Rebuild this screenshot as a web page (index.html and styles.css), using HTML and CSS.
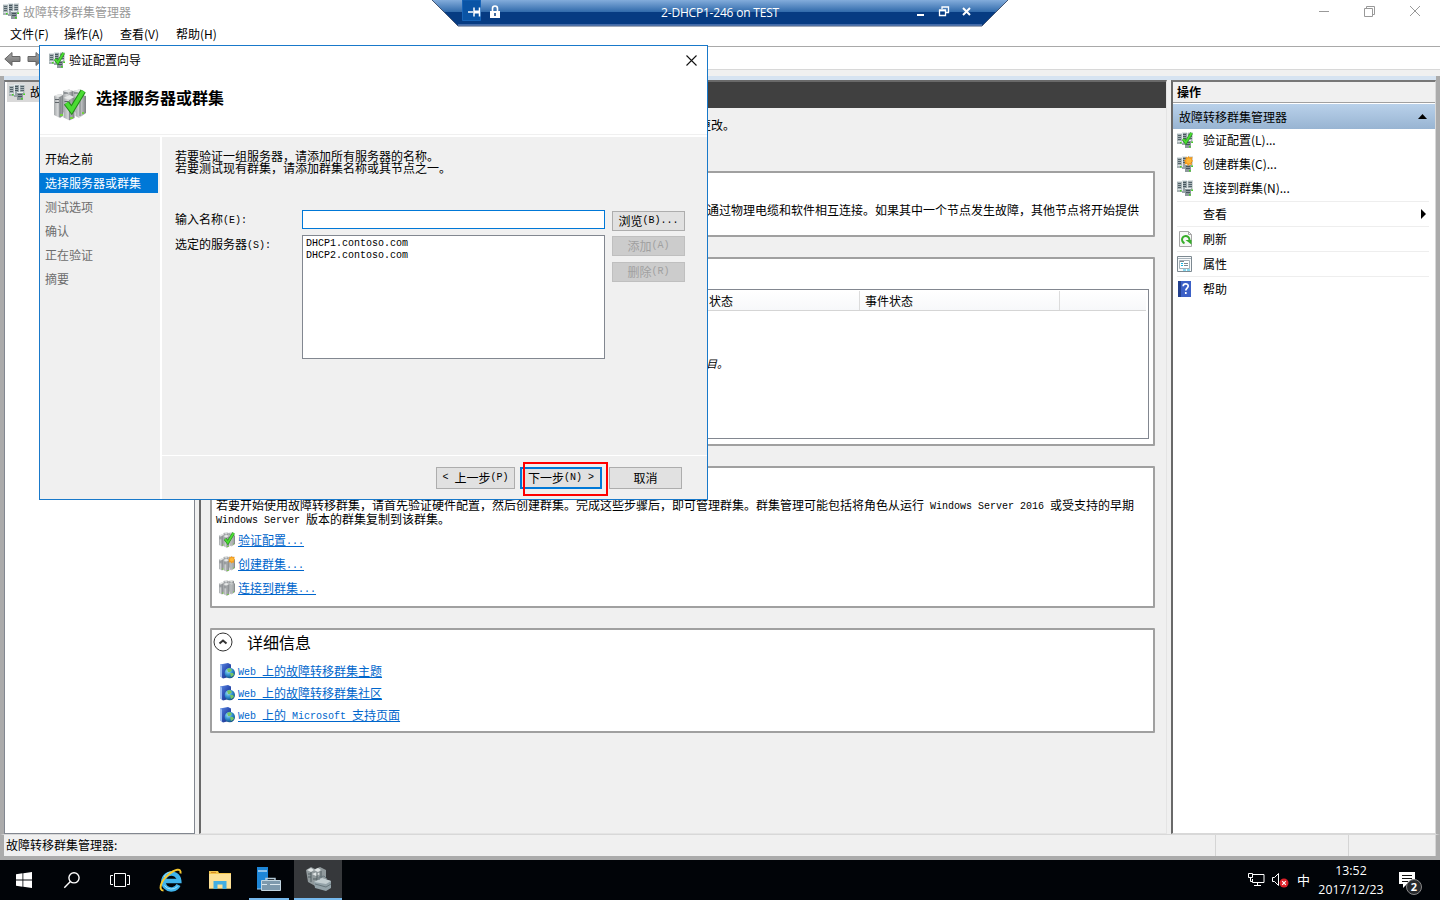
FILE: index.html
```html
<!DOCTYPE html>
<html lang="zh-CN">
<head>
<meta charset="utf-8">
<title>故障转移群集管理器</title>
<link rel="stylesheet" href="styles.css">
</head>
<body>
<svg class="defs" width="0" height="0" aria-hidden="true">
  <defs>
    <linearGradient id="metal" x1="0" x2="1" y1="0" y2="0"><stop offset="0" stop-color="#a4a8aa"/><stop offset=".4" stop-color="#d3d5d6"/><stop offset="1" stop-color="#7b7f82"/></linearGradient>
    <linearGradient id="arrow" x1="0" x2="0" y1="0" y2="1"><stop offset="0" stop-color="#a8a8a8"/><stop offset="1" stop-color="#6c6c6c"/></linearGradient>
    <linearGradient id="rdp" x1="0" x2="0" y1="0" y2="1"><stop offset="0" stop-color="#83acdb"/><stop offset=".47" stop-color="#2f69aa"/><stop offset=".48" stop-color="#063b82"/><stop offset="1" stop-color="#063b82"/></linearGradient>
    <linearGradient id="book" x1="0" x2="1" y1="0" y2="1"><stop offset="0" stop-color="#5f8de6"/><stop offset=".5" stop-color="#2c4fb4"/><stop offset="1" stop-color="#1c2f7c"/></linearGradient>
    <radialGradient id="globe" cx=".35" cy=".3" r=".8"><stop offset="0" stop-color="#a8e4f5"/><stop offset=".5" stop-color="#2f8fd0"/><stop offset="1" stop-color="#0d4474"/></radialGradient>
  </defs>
  <symbol id="servers" viewBox="0 0 16 16">
    <path d="M0 1h5v11H0z" fill="#a9b3b6"/><path d="M1 3.500h3M1 5.500h3M1 7.500h3" stroke="#53636b"/><path d="M0 1.500h5M.5 9.500h4" stroke="#dce3e5"/>
    <path d="M5 0h5v13H5z" fill="#98a4a9"/><path d="M6 2.500h3M6 4.500h3M6 6.500h3" stroke="#46565e"/><path d="M5 .5h5M5.500 1v10" stroke="#e2e8ea"/>
    <path d="M11 0h4.500v11H11z" fill="#a9b3b6"/><path d="M11.500 2.500H15M11.500 4.500H15M11.500 6.500H15" stroke="#53636b"/><path d="M11 .5h5M10.500 1v7" stroke="#dce3e5"/>
    <path d="M8 8h6v8H8z" fill="#8d989c"/><path d="M9 10.500h4M9 12.500h4" stroke="#46565e"/><path d="M8 8.500h6" stroke="#e7edee"/>
    <path d="M3 10h1.500v1.500H3zM14.300 9.500H16V11h-1.700zM12 14h1.700v1.500H12z" fill="#43d421"/>
  </symbol>
  <symbol id="tick" viewBox="0 0 16 16"><path d="M6.200 7 8.800 10.500 14.600 1" fill="none" stroke="#228a18" stroke-width="3"/><path d="M6.200 7 8.800 10.500 14.600 1" fill="none" stroke="#4bdc34" stroke-width="1.900"/></symbol>
  <symbol id="spark" viewBox="0 0 16 16"><path d="m11.500 0 1 1.500 3-.5-.5 2.500L16 5l-1.500 1.500.5 2.500-2.500-.5L11 10l-1-2-2.500.5L8 6 7 4.500l1.700-1L8.500 1l2 .5z" fill="#f39a1c"/><circle cx="11.800" cy="4.800" r="2.600" fill="#ffb838"/></symbol>
  <symbol id="cluster" viewBox="0 0 32 32">
    <path d="M9 2 15 .5 19 2v22l-7 2-3-3z" fill="url(#metal)"/><path d="m19 2 6-1.500L30 2v20l-6 3-5-3z" fill="url(#metal)"/>
    <path d="m0 7 5-2 4 1v21l-3 2-6-3z" fill="url(#metal)"/><path d="m9.500 9 6-3 5 2v21l-5 2.500-6-3z" fill="url(#metal)"/><path d="m21.500 8 6-2L32 7v17l-7 5-3.500-2z" fill="url(#metal)"/>
    <path d="M6 8v20M15.800 11v20M26 9v18" stroke="#70767a"/><path d="M1 10.500h4M1 13.500h4M10.500 12.500h4M10.500 15.500h4M10 4h4M20 4h4" stroke="#5f656a" stroke-width="1.200"/>
    <path d="m0 7 5-2 4 1-4 2zM9.500 9l6-3 5 2-5 2.500zM9 2l6-1.500L19 2l-5 1.500zM19 2l6-1.500L30 2l-5 1.500z" fill="#e6e8e8"/><path d="M6 25h3v2H6zM16 28h3v2h-3zM28 23h2v2h-2z" fill="#74d23f"/>
  </symbol>
  <symbol id="web" viewBox="0 0 16 16"><path d="m1 1.500 8-1.500 3 1.500v12L4 15.500 1 13z" fill="url(#book)"/><path d="m1 1.500 2 1v12L1 13z" fill="#9bbcf2"/><circle cx="10.800" cy="10" r="5.200" fill="url(#globe)"/><path d="m8 6 3-1 2 2-2 2H9zm3 4 3 0 1 2-3 2z" fill="#75c665"/></symbol>
</svg>

<div class="screen">
  <header class="titlebar">
    <svg class="i16"><use href="#servers"/></svg><span class="title">故障转移群集管理器</span>
    <svg class="winbtns" width="104" height="20" viewBox="0 0 104 20" fill="none" stroke="#999"><path d="M0 10.500h10M45.500 7.500h8v8h-8zM47.500 7V5.500h8v8h-2M91 5l10 10M101 5 91 15"/></svg>
  </header>
  <nav class="menubar"><span>文件(F)</span><span>操作(A)</span><span>查看(V)</span><span>帮助(H)</span></nav>
  <div class="toolbar"><svg width="17" height="16" viewBox="0 0 17 16"><path d="M.8 8 8 1.500v4h8v5H8v4z" fill="url(#arrow)" stroke="#666"/></svg><svg width="17" height="16" viewBox="0 0 17 16"><path d="M16.200 8 9 1.500v4H1v5h8v4z" fill="url(#arrow)" stroke="#666"/></svg></div>

  <main class="workspace">
    <aside class="tree"><div class="tree-node"><svg class="i16"><use href="#servers"/></svg><span>故</span></div></aside>
    <section class="center">
      <div class="banner"></div>
      <p class="intro">更改。</p>
      <div class="box overview"><p>通过物理电缆和软件相互连接。如果其中一个节点发生故障，其他节点将开始提供</p></div>
      <div class="box clusters">
        <div class="list">
          <div class="list-head"><span class="c1">状态</span><span class="c2">事件状态</span><span class="c3"></span></div>
          <p class="empty">目。</p>
        </div>
      </div>
      <div class="box manage">
        <p>若要开始使用故障转移群集，请首先验证硬件配置，然后创建群集。完成这些步骤后，即可管理群集。群集管理可能包括将角色从运行<i class="m"> Windows Server 2016 </i>或受支持的早期<br><i class="m">Windows Server </i>版本的群集复制到该群集。</p>
        <div class="link"><span class="ic"><svg class="i16"><use href="#cluster"/></svg><svg class="i16 over"><use href="#tick"/></svg></span><a>验证配置<i class="m">...</i></a></div>
        <div class="link"><span class="ic"><svg class="i16"><use href="#cluster"/></svg><svg class="i12 over"><use href="#spark"/></svg></span><a>创建群集<i class="m">...</i></a></div>
        <div class="link"><span class="ic"><svg class="i16"><use href="#cluster"/></svg></span><a>连接到群集<i class="m">...</i></a></div>
      </div>
      <div class="box details">
        <h2><svg width="20" height="20" viewBox="0 0 20 20" fill="none" stroke="#333"><circle cx="10" cy="10" r="9"/><path d="m6.500 11.500 3.500-3 3.500 3" stroke-width="2"/></svg>详细信息</h2>
        <div class="link"><svg class="i16"><use href="#web"/></svg><a><i class="m">Web </i>上的故障转移群集主题</a></div>
        <div class="link"><svg class="i16"><use href="#web"/></svg><a><i class="m">Web </i>上的故障转移群集社区</a></div>
        <div class="link"><svg class="i16"><use href="#web"/></svg><a><i class="m">Web </i>上的<i class="m"> Microsoft </i>支持页面</a></div>
      </div>
    </section>
    <aside class="actions">
      <h3>操作</h3>
      <div class="group"><span>故障转移群集管理器</span><svg width="9" height="5"><path d="M0 5 4.500 0 9 5z"/></svg></div>
      <div class="act"><span class="ic"><svg class="i16"><use href="#servers"/></svg><svg class="i16 over"><use href="#tick"/></svg></span><span>验证配置(L)...</span></div>
      <div class="act"><span class="ic"><svg class="i16"><use href="#servers"/></svg><svg class="i16 over"><use href="#spark"/></svg></span><span>创建群集(C)...</span></div>
      <div class="act"><span class="ic"><svg class="i16"><use href="#servers"/></svg></span><span>连接到群集(N)...</span></div>
      <div class="act sep"><span class="ic"></span><span>查看</span><svg class="more" width="5" height="10"><path d="M0 0 5 5 0 10z"/></svg></div>
      <div class="act sep"><span class="ic"><svg class="i16" viewBox="0 0 16 16"><path d="M2.500.5h9l3 3v12h-12z" fill="#f7f7f7" stroke="#a6a6a6"/><path d="M11.500.5v3h3" fill="none" stroke="#a6a6a6"/><path d="M7.500 12.200a3.700 3.700 0 1 1 4.700-2.200" fill="none" stroke="#36ad29" stroke-width="2"/><path d="M8.500 9h6v4.500z" fill="#36ad29"/></svg></span><span>刷新</span></div>
      <div class="act sep"><span class="ic"><svg class="i16" viewBox="0 0 16 16"><path d="M.5.5h14v15H.500z" fill="#f8fafb" stroke="#7d8991"/><path d="M1 2.500h13" stroke="#a9b4bc"/><path d="M2.500 4.500h10v8h-10z" fill="#fff" stroke="#a6b0b7"/><path d="M7 7.500h4M7 9.500h4M3 5.500h4" stroke="#7d8991"/><path d="M4 7.500h2M4 9.500h2M6 14h3M10 14h3" stroke="#17b6e2"/></svg></span><span>属性</span></div>
      <div class="act sep"><span class="ic"><svg class="i16" viewBox="0 0 16 16"><path d="M1 0h13v16H1z" fill="#3c60c6"/><path d="M1 0h3v16H1z" fill="#23408e"/><path d="M6.200 5.200c0-3 5-3 5-.2 0 2-2.400 2.200-2.400 4.500M8.800 11v2" fill="none" stroke="#fff" stroke-width="1.700"/></svg></span><span>帮助</span></div>
    </aside>
  </main>
  <footer class="status"><span class="s0">故障转移群集管理器:</span><span class="s1"></span><span class="s2"></span></footer>

  <div class="taskbar">
    <div class="tb"><svg width="16" height="16" viewBox="0 0 16 16" fill="#fff"><path d="M0 2.300 6.500 1.300v6.300H0zM7.300 1.200 16 0v7.600H7.300zM0 8.400h6.500v6.300L0 13.800zM7.300 8.400H16V16l-8.700-1.200z"/></svg></div>
    <div class="tb"><svg width="16" height="16" viewBox="0 0 16 16" fill="none" stroke="#fff" stroke-width="1.400"><circle cx="10" cy="5.800" r="5.100"/><path d="M6.400 9.500.3 15.700"/></svg></div>
    <div class="tb"><svg width="20" height="16" viewBox="0 0 20 16" fill="none" stroke="#fff"><path d="M4.500 1.500h11v13h-11zM3 3.500H.5v9H3M17 3.500h2.500v9H17"/></svg></div>
    <div class="tb ie"><svg width="24" height="24" viewBox="0 0 24 24" fill="none"><path d="M19.500 17A8 8 0 1 1 20.300 13H6" stroke="#3fb4ec" stroke-width="4.400"/><path d="M18.500 18.500a8.500 8.500 0 0 1-13-1M5 9a8.500 8.500 0 0 1 7-5" stroke="#a5e5fc" stroke-width="1"/><path d="M4.500 22.500C-.5 22.500 1 14 8.500 7.500S22.500-.5 21.500 5.500" stroke="#f7c82f" stroke-width="2"/></svg></div>
    <div class="tb folder"><svg width="22" height="20" viewBox="0 0 22 20"><path d="M0 1h9l1 2h12v15.500H0z" fill="#f3c54c"/><path d="M0 4h22v14.500H0z" fill="#fde196"/><path d="M2 2h5v1H2z" fill="#d88c24"/><path d="M4.500 19v-8h13v8h-4v-4.500h-5V19z" fill="#42aee2"/></svg></div>
    <div class="tb run"><svg width="24" height="24" viewBox="0 0 24 24"><path d="M0 0h11v22H0z" fill="#1d86d7"/><path d="M1 4h9" stroke="#fff"/><path d="M0 22h5" stroke="#9bd0f5" stroke-width="1"/><path d="M9 14v-2.500h9V14" fill="none" stroke="#b5cad7" stroke-width="1.500"/><path d="M4.500 13.500h19v10h-19z" fill="#7d99ad" stroke="#c1d4df"/><path d="M5 17.500h5m3 0h10" stroke="#dbe7ee"/></svg></div>
    <div class="tb run active"><svg width="25" height="25" viewBox="0 0 25 25"><path d="m0 3 5-3 4 2 5-2 6 3v14l-9 3-9-5z" fill="#90999c"/><path d="m1 3 4-2 3 2-3 2zM8 3l4-2 3 2-3 2zM6 7l5-2 3 2-4 2z" fill="#e0e5e6"/><path d="M5 5v10M11 5v9M15 4v7M2 7h3M2 10h3M7 12h4" stroke="#535e63"/><path d="m8 15 8-4 9 3v7l-5 3-11-3z" fill="#93a2a8"/><path d="m8 15 8-4 9 3-5 3z" fill="#c3ced1"/><path d="m9 17 11 3 5-3M13 13v-3l5-1 3 3" fill="none" stroke="#68777d"/></svg></div>
    <div class="tray">
      <svg class="net" width="17" height="15" viewBox="0 0 17 15" fill="none" stroke="#fff"><path d="M5 1.500h11v8H4.500V6M6 12.500h7M9.500 10v2M.5.5h4v4h-4zM2.500 4.500v4h2"/></svg>
      <svg class="vol" width="17" height="15" viewBox="0 0 17 15"><path d="M.5 4.500h2l4-4v12l-4-4h-2z" fill="none" stroke="#fff"/><circle cx="12" cy="10" r="4.500" fill="#dc2028"/><path d="m10.200 8.200 3.600 3.600M13.800 8.200l-3.600 3.600" stroke="#fff" stroke-width="1.200"/></svg>
      <span class="ime">中</span>
      <div class="clock"><span>13:52</span><span>2017/12/23</span></div>
      <div class="note"><svg width="17" height="16" viewBox="0 0 17 16"><path d="M0 0h16v12H8l-4 4v-4H0z" fill="#fff"/><path d="M3 3.500h10M3 6.500h10M3 9.500h6" stroke="#111"/></svg><b>2</b></div>
    </div>
  </div>

  <div class="rdpbar">
    <svg class="rdp-bg" width="576" height="27" viewBox="0 0 576 27"><path d="M0 0h576l-26 26H26z" fill="url(#rdp)"/><path d="m0 0 26 26h524L576 0" fill="none" stroke="#435574"/><path d="M26 25h524" stroke="#7d9bd0"/><path d="M30.500 0h18v20.500h-18z" fill="#0a54a5" stroke="#1764b8"/>
      <g fill="none" stroke="#fff"><path d="M36 12h5" stroke-width="1.500"/><path d="M42 7.500v9M47.500 7.500v9" stroke-width="1.500"/><path d="M42 12h5" stroke-width="3"/></g>
      <path d="M58 11h10v7H58z" fill="#fff"/><path d="M60.500 11V8.500a2.500 2.500 0 0 1 5 0V11" fill="none" stroke="#fff" stroke-width="1.600"/><path d="M63 13v3" stroke="#063b82" stroke-width="1.500"/>
      <g fill="none" stroke="#fff"><path d="M485 15h7" stroke-width="2"/><path d="M507.500 10.500h6v5h-6zM507 10h7M510 9V7h6.500v5.500H514" stroke-width="1.300"/><path d="m531 8 7 7M538 8l-7 7" stroke-width="2"/></g>
    </svg>
    <span class="rdp-title">2-DHCP1-246 on TEST</span>
  </div>

  <div class="wizard">
    <div class="wz-title"><span class="ic"><svg class="i16"><use href="#servers"/></svg><svg class="i16 over"><use href="#tick"/></svg></span><span>验证配置向导</span><svg class="wz-close" width="11" height="11"><path d="M.5.5l10 10M10.500.5l-10 10" stroke="#111" stroke-width="1.100"/></svg></div>
    <div class="wz-head"><span class="ic32"><svg width="32" height="32"><use href="#cluster"/></svg><svg class="over big" width="32" height="32"><use href="#tick"/></svg></span><h1>选择服务器或群集</h1></div>
    <div class="wz-body">
      <ul class="steps"><li>开始之前</li><li class="on">选择服务器或群集</li><li class="off">测试选项</li><li class="off">确认</li><li class="off">正在验证</li><li class="off">摘要</li></ul>
      <div class="page">
        <div class="form">
          <p class="help">若要验证一组服务器，请添加所有服务器的名称。<br>若要测试现有群集，请添加群集名称或其节点之一。</p>
          <label class="l1">输入名称<i class="m">(E):</i></label><div class="input"></div><div class="btn">浏览<i class="m">(B)...</i></div>
          <label class="l2">选定的服务器<i class="m">(S):</i></label><div class="servers"><i class="m">DHCP1.contoso.com</i><i class="m">DHCP2.contoso.com</i></div>
          <div class="side"><div class="btn dis">添加<i class="m">(A)</i></div><div class="btn dis">删除<i class="m">(R)</i></div></div>
        </div>
        <div class="wz-foot"><div class="btn prev"><i class="m">&lt; </i>上一步<i class="m">(P)</i></div><div class="btn next">下一步<i class="m">(N) &gt;</i></div><div class="btn cancel">取消</div></div>
      </div>
    </div>
    <div class="mark"></div>
  </div>
</div>
</body>
</html>
```
FILE: styles.css
```css
* { box-sizing: border-box; margin: 0; padding: 0; }
body { width: 1440px; height: 900px; overflow: hidden; font: 12px/16px "Noto Sans CJK SC", sans-serif; color: #000; text-spacing-trim: space-all; }
svg { display: block; flex: none; overflow: visible; }
.defs { position: absolute; }
.i16 { width: 16px; height: 16px; }
.i12 { width: 12px; height: 12px; }
.ic { position: relative; width: 16px; height: 16px; flex: none; }
.ic32 { position: relative; width: 32px; height: 32px; flex: none; }
.over { position: absolute; top: 0; right: 0; }
.m { font: normal 10px/10px "Liberation Mono", monospace; white-space: pre; vertical-align: 1px; }

.screen { position: relative; display: flex; flex-direction: column; width: 1440px; height: 900px; background: #fff; white-space: nowrap; }
.titlebar { display: flex; align-items: center; height: 22px; padding: 0 17px 0 3px; color: #999; }
.title { margin-left: 4px; padding-top: 1px; }
.winbtns { margin-left: auto; }
.menubar { display: flex; height: 24px; padding: 4px 0 0 10px; }
.menubar span { width: 56px; }
.menubar span:first-child { width: 54px; }
.toolbar { display: flex; gap: 6px; height: 24px; padding: 4px 4px; border-top: 1px solid #a9a9a9; border-bottom: 1px solid #d8d8d8; }
.workspace { position: relative; display: flex; gap: 4px; height: 764px; padding: 10px 4px 0; background: linear-gradient(#f0f0f0 6px, #d6e3f1 6px, #d6e3f1 10px, #f0f0f0 10px); }
.workspace::before, .workspace::after { content: ""; position: absolute; top: 6px; bottom: 0; width: 4px; background: #ababab; left: 0; }
.workspace::after { left: 1436px; }

.tree { width: 191px; background: #fff; border: 1px solid #828790; border-top: 2px solid #777; }
.tree-node { display: flex; gap: 5px; width: 60px; height: 20px; padding: 2px; margin-left: 2px; background: #d9d9d9; }
.tree-node span { line-height: 15px; }
.center { width: 968px; border: 1px solid #e4e4e4; border-left: 2px solid #696969; border-top: 2px solid #696969; background: #f0f0f0; }
.banner { height: 26px; background: #404040; }
.intro { height: 63px; padding: 9px 0 0 498px; }
.box { width: 945px; margin-left: 9px; background: #fff; border: 2px solid #a0a0a0; border-radius: 1px; }
.overview { height: 66px; padding: 29px 0 0 495px; }
.clusters { height: 189px; margin-top: 20px; padding: 30px 4px 5px 4px; }
.list { height: 150px; border: 1px solid #828790; padding: 1px 2px; }
.list-head { display: flex; height: 20px; line-height: 20px; background: linear-gradient(#fff, #f7f8fa); border-bottom: 1px solid #d5d5d5; }
.c1 { width: 641px; padding-left: 490px; border-right: 1px solid #dcdcdc; }
.c2 { width: 200px; padding-left: 5px; border-right: 1px solid #dcdcdc; }
.empty { padding: 44px 0 0 487px; font-style: italic; font-size: 11px; }
.manage { height: 142px; margin-top: 20px; padding: 30px 0 0 4px; }
.manage p { height: 30px; line-height: 14px; }
.link { display: flex; align-items: center; gap: 3px; height: 24px; padding-left: 3px; }
.link a { color: #0066cc; text-decoration: underline; line-height: 16px; }
.details { height: 105px; margin-top: 20px; }
.details h2 { display: flex; align-items: center; gap: 14px; height: 26px; margin: -1px 0 5px 1px; font-size: 16px; font-weight: 400; }
.details .link { height: 22px; gap: 3px; padding-left: 7px; }
.details .link a { margin-top: -1px; }

.actions { width: 265px; border: 1px solid #d8d8d8; border-left: 2px solid #696969; border-top: 2px solid #777; background: #fff; }
.actions h3 { height: 21px; font-size: 12px; line-height: 20px; padding-left: 4px; background: #f0f0f0; border-bottom: 1px solid #a0a0a0; }
.group { display: flex; align-items: center; justify-content: space-between; height: 25px; margin-top: 1px; padding: 0 8px 0 6px; background: linear-gradient(#b9d1ea, #98b4d2); }
.act { display: flex; align-items: center; gap: 10px; height: 24px; margin: 0 6px 0 4px; }
.act > span:nth-child(2) { margin-top: -2px; }
.act .ic { top: -1px; }
.sep { height: 25px; border-top: 1px solid #eee; }
.sep:nth-child(n+7) .ic { top: 0; }
.sep > span:nth-child(2) { margin-top: -1px; }
.more { margin-left: auto; margin-right: 3px; }

.status { display: flex; height: 26px; border: 4px solid #ababab; border-top: 1px solid #d8d8d8; background: #f0f0f0; }
.status span { border-right: 1px solid #d5d5d5; line-height: 20px; }
.s0 { width: 1212px; padding-left: 2px; }
.s1 { width: 133px; }
.s2 { flex: 1; }

.taskbar { display: flex; height: 40px; background: #010408; color: #fff; }
.tb { display: flex; align-items: center; justify-content: center; width: 48px; height: 40px; }
.ie { width: 54px; }
.folder { width: 47px; padding-right: 4px; }
.run { border-bottom: 2px solid #76b9ed; width: 40px; margin-left: 4px; margin-right: 5px; }
.active { width: 48px; margin: 0; background: #36383b; }
.tray { display: flex; align-items: center; margin-left: auto; width: 192px; }
.vol { margin-left: 7px; }
.ime { width: 14px; margin-left: 8px; font-size: 13px; }
.clock { display: flex; flex-direction: column; align-items: center; width: 80px; font: 12.3px/19px "Open Sans", sans-serif; }
.note { position: relative; margin-left: 8px; }
.note b { position: absolute; left: 7px; top: 7px; width: 16px; height: 16px; border: 1px solid #888; border-radius: 50%; background: #282a2d; font: bold 11px/14px "Open Sans", sans-serif; text-align: center; }

.rdpbar { position: absolute; left: 432px; top: 0; width: 576px; height: 27px; }
.rdp-title { position: absolute; left: 0; right: 0; top: 5px; text-align: center; color: #fff; font: 12px/16px "Open Sans", sans-serif; letter-spacing: -.2px; }

.wizard { position: absolute; left: 39px; top: 45px; width: 669px; height: 455px; border: 1px solid #1979ca; background: #fff; display: flex; flex-direction: column; }
.wz-title { display: flex; align-items: center; gap: 4px; height: 28px; padding: 0 10px 0 9px; }
.wz-close { margin-left: auto; }
.wz-head { display: flex; gap: 10px; height: 61px; padding: 15px 0 0 14px; border-bottom: 1px solid #f0f0f0; }
.wz-head h1 { margin-top: -2px; font-size: 16px; line-height: 20px; }
.wz-body { display: flex; flex: 1; gap: 2px; margin-top: 2px; }
.steps { width: 120px; list-style: none; padding-top: 12px; background: #f0f0f0; }
.steps li { width: 118px; height: 20px; margin-bottom: 4px; padding-left: 5px; line-height: 20px; }
.steps .on { background: #0078d7; color: #fff; }
.steps .off { color: #6d6d6d; }
.page { flex: 1; display: flex; flex-direction: column; background: #f0f0f0; }
.form { display: grid; grid-template: 73px 25px 1fr / 126px 303px 73px; height: 319px; padding-left: 14px; border-bottom: 1px solid #fff; }
.form .btn, .side { margin-left: 7px; }
.side .btn { margin: 1px 0 6px; }
.help { grid-column: 1 / 4; padding-top: 13px; margin-left: -1px; line-height: 12px; }
.form label { margin-left: -1px; line-height: 18px; }
.input { height: 19px; border: 1px solid #0078d7; background: #fff; }
.servers { display: flex; flex-direction: column; gap: 2px; height: 124px; padding: 3px; border: 1px solid #828790; background: #fff; }
.btn { display: flex; align-items: center; justify-content: center; width: 73px; height: 20px; border: 1px solid #adadad; background: #e1e1e1; }
.form > .btn { margin-top: 1px; }
.dis { color: #a0a0a0; background: #ccc; border-color: #bfbfbf; }
.wz-foot { display: flex; padding: 11px 0 0 274px; }
.wz-foot .btn { height: 22px; }
.wz-foot .prev { width: 79px; }
.wz-foot .next { width: 82px; margin: 0 7px 0 5px; border: 2px solid #0078d7; }
.mark { position: absolute; left: 483px; top: 416px; width: 85px; height: 34px; border: 2px solid #f00; }
```
